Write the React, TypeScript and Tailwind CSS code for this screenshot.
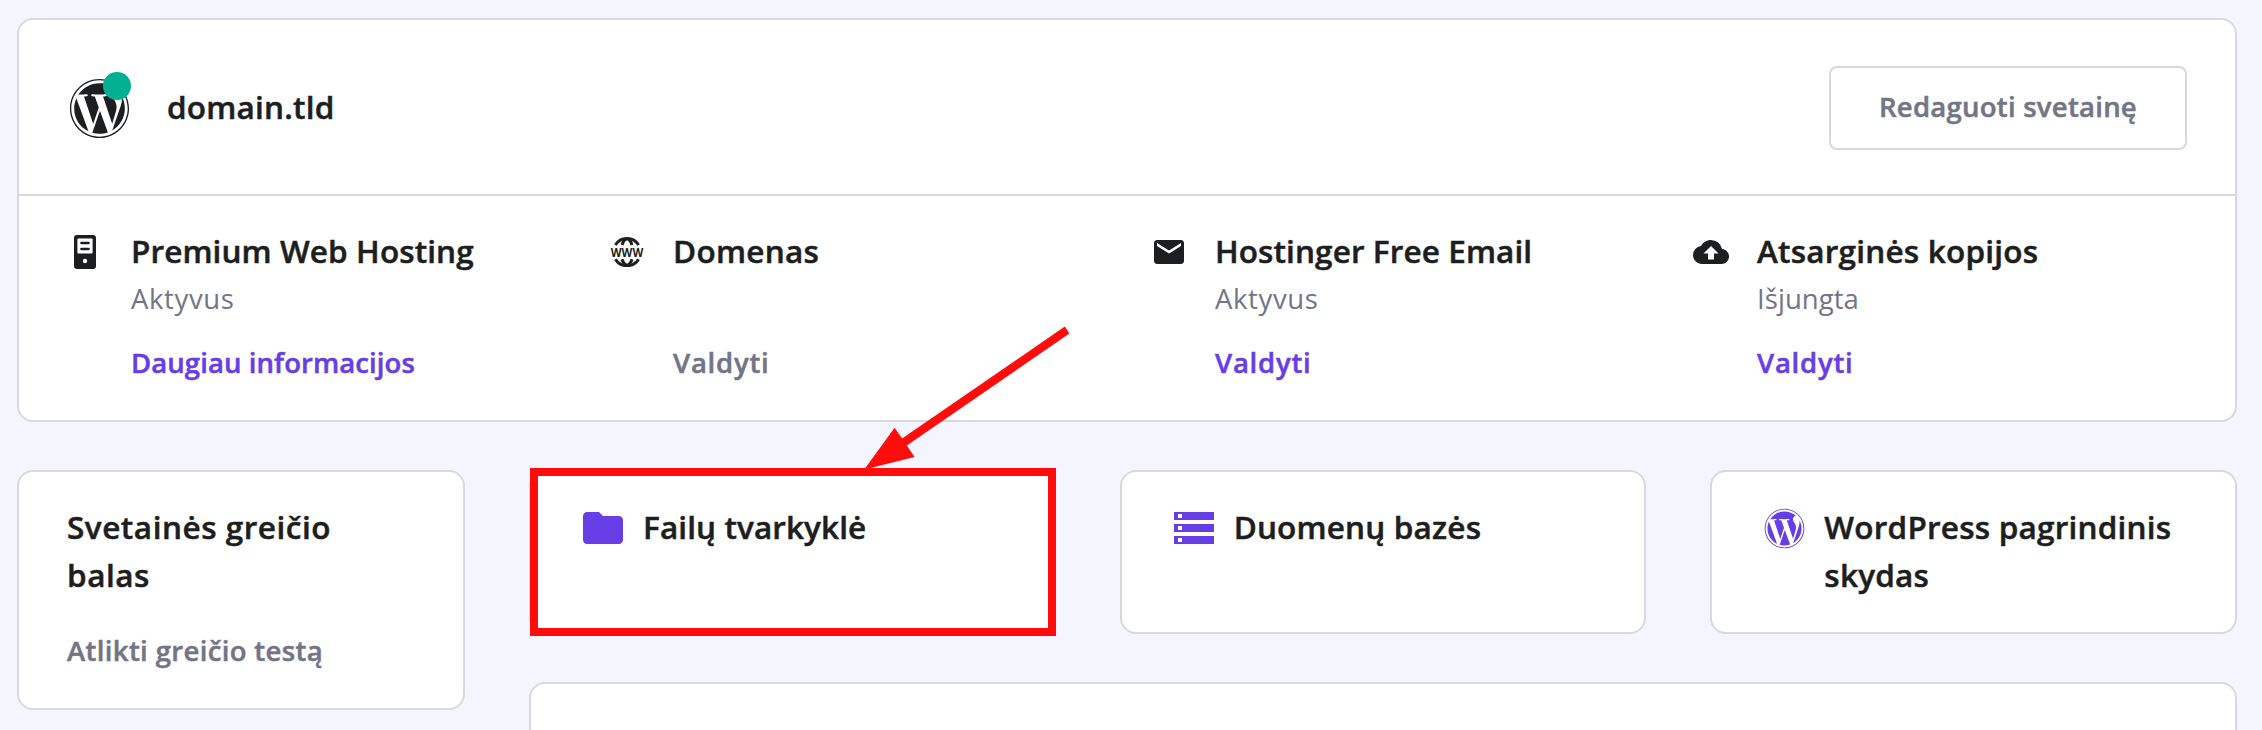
import type { ReactNode } from "react";
import { FaWordpress } from "react-icons/fa";
import { MdBackup, MdEmail, MdFolder, MdStorage } from "react-icons/md";

function ServerIcon() {
  return (
    <svg width="22" height="34" viewBox="0 0 22 34" fill="none">
      <path
        fillRule="evenodd"
        clipRule="evenodd"
        fill="currentColor"
        d="M3 0H19A3 3 0 0 1 22 3V31A3 3 0 0 1 19 34H3A3 3 0 0 1 0 31V3A3 3 0 0 1 3 0ZM4.4 3.6A1 1 0 0 0 3.4 4.6V17.6A1 1 0 0 0 4.4 18.6H17.6A1 1 0 0 0 18.6 17.6V4.6A1 1 0 0 0 17.6 3.6ZM11 23.8A2.2 2.2 0 1 0 11 28.2A2.2 2.2 0 1 0 11 23.8Z"
      />
      <path d="M7.4 8H14.6M7.4 14H14.6" stroke="currentColor" strokeWidth="2.4" strokeLinecap="round" />
    </svg>
  );
}

function WwwIcon() {
  return (
    <div className="relative flex h-9 w-11 shrink-0 items-center justify-center">
      <svg width="34" height="30" viewBox="0 0 34 30" fill="none">
        <g stroke="currentColor" strokeWidth="3">
          <path d="M5.4 8A13.6 13.6 0 0 1 28.6 8" />
          <path d="M5.4 22.2A13.6 13.6 0 0 0 28.6 22.2" />
          <path d="M12 8C12.8 5.2 14.6 2.4 17 1.6C19.4 2.4 21.2 5.2 22 8" />
          <path d="M12 22.2C12.8 24.8 14.6 27.6 17 28.4C19.4 27.6 21.2 24.8 22 22.2" />
        </g>
      </svg>
      <span className="absolute inset-x-0 top-[9px] scale-x-[0.86] text-center text-[13px] leading-[18px] font-bold">
        WWW
      </span>
    </div>
  );
}

type Service = {
  icon: ReactNode;
  title: string;
  titleClass: string;
  status: string;
  statusClass: string;
  action: string;
  actionClass: string;
};

const services: Service[] = [
  {
    icon: <ServerIcon />,
    title: "Premium Web Hosting",
    titleClass: "tracking-[0.1px]",
    status: "Aktyvus",
    statusClass: "tracking-[0.63px]",
    action: "Daugiau informacijos",
    actionClass: "tracking-[0.09px] text-[#673de6]",
  },
  {
    icon: <WwwIcon />,
    title: "Domenas",
    titleClass: "tracking-[0.3px]",
    status: "",
    statusClass: "",
    action: "Valdyti",
    actionClass: "tracking-[0.76px] text-[#727586]",
  },
  {
    icon: <MdEmail size={36} />,
    title: "Hostinger Free Email",
    titleClass: "tracking-[0.1px]",
    status: "Aktyvus",
    statusClass: "tracking-[0.63px]",
    action: "Valdyti",
    actionClass: "tracking-[0.76px] text-[#673de6]",
  },
  {
    icon: <MdBackup size={36} />,
    title: "Atsarginės kopijos",
    titleClass: "tracking-[0.22px]",
    status: "Išjungta",
    statusClass: "tracking-[0.05px]",
    action: "Valdyti",
    actionClass: "tracking-[0.76px] text-[#673de6]",
  },
];

const tools = [
  { icon: <MdFolder size={48} />, title: "Failų tvarkyklė", titleClass: "tracking-[0.1px]" },
  { icon: <MdStorage size={48} />, title: "Duomenų bazės", titleClass: "tracking-[0.18px]" },
  { icon: <FaWordpress size={41} />, title: "WordPress pagrindinis skydas", titleClass: "tracking-[0.22px]" },
];

function ServiceColumn({ icon, title, titleClass, status, statusClass, action, actionClass }: Service) {
  return (
    <div className="flex gap-7">
      <div className="flex h-[50px] w-9 shrink-0 items-center justify-center">{icon}</div>
      <div className="flex flex-col whitespace-nowrap">
        <h3 className={`text-[31.5px] leading-[48px] font-semibold [-webkit-text-stroke:0.5px] ${titleClass}`}>{title}</h3>
        <p className={`h-12 text-[27.5px] leading-[48px] text-[#727586] ${statusClass}`}>{status}</p>
        <a className={`mt-4 text-[27.5px] leading-[48px] font-semibold [-webkit-text-stroke:0.5px] ${actionClass}`}>
          {action}
        </a>
      </div>
    </div>
  );
}

export default function App() {
  return (
    <div className="relative h-[730px] w-full overflow-hidden bg-[#f4f5ff] pt-[18px] pr-[25px] pl-[17px] font-['Open_Sans','Noto_Sans',sans-serif] text-[#1d1e20]">
      <section className="h-[404px] rounded-2xl border-2 border-[#d9d9d9] bg-white">
        <header className="flex h-44 items-start justify-between border-b-2 border-[#d9d9d9] px-12 pt-[46px]">
          <div className="flex h-[84px] items-center">
            <div className="relative flex size-[64px] items-center justify-center">
              <FaWordpress size={61} />
              <span className="absolute -top-1 right-0 size-7 rounded-full bg-[#00b090]" />
            </div>
            <h2 className="mb-0.5 ml-9 text-[31.5px] leading-[48px] font-semibold tracking-[0.21px] [-webkit-text-stroke:0.5px]">
              domain.tld
            </h2>
          </div>
          <button className="flex h-[84px] w-[358px] items-center justify-center rounded-lg border-2 border-[#d9d9d9] text-[27.5px] leading-[48px] font-semibold tracking-[0.25px] whitespace-nowrap text-[#727586] [-webkit-text-stroke:0.5px]">
            <span className="mb-0.5">Redaguoti svetainę</span>
          </button>
        </header>
        <div className="grid grid-cols-[repeat(4,542px)] pt-[31px] pl-12">
          {services.map((service) => (
            <ServiceColumn key={service.title} {...service} />
          ))}
        </div>
      </section>

      <div className="mt-12 flex items-start gap-16">
        <section className="h-60 w-[448px] shrink-0 rounded-2xl border-2 border-[#d9d9d9] bg-white px-12 pt-[31px]">
          <h3 className="w-[300px] text-[31.5px] leading-[48px] font-semibold tracking-[0.52px] [-webkit-text-stroke:0.5px]">
            Svetainės greičio balas
          </h3>
          <p className="mt-7 text-[27.5px] leading-[48px] font-semibold tracking-[0.35px] whitespace-nowrap text-[#727586] [-webkit-text-stroke:0.5px]">
            Atlikti greičio testą
          </p>
        </section>

        <div className="flex min-w-0 grow flex-col gap-12">
          <div className="grid grid-cols-3 gap-16">
            {tools.map(({ icon, title, titleClass }) => (
              <section
                key={title}
                className="flex h-[164px] gap-4 rounded-2xl border-2 border-[#d9d9d9] bg-white pt-[31px] pl-12"
              >
                <div className="flex h-[50px] w-12 shrink-0 items-center justify-center text-[#673de6]">{icon}</div>
                <h3
                  className={`w-[360px] text-[31.5px] leading-[48px] font-semibold [-webkit-text-stroke:0.5px] ${titleClass}`}
                >
                  {title}
                </h3>
              </section>
            ))}
          </div>
          <section className="h-40 rounded-2xl border-2 border-[#d9d9d9] bg-white" />
        </div>
      </div>

      <div className="pointer-events-none absolute top-[468px] left-[530px] h-[168px] w-[526px] border-8 border-[#ff0d0d]" />
      <svg
        className="pointer-events-none absolute top-[320px] left-[860px]"
        width="220"
        height="155"
        viewBox="860 320 220 155"
        fill="#ff0d0d"
      >
        <polygon points="864.3,469.5 894.6,427.7 902.1,438.5 1064.8,326.6 1069.4,333.5 906.8,445.5 914.6,457" />
      </svg>
    </div>
  );
}
